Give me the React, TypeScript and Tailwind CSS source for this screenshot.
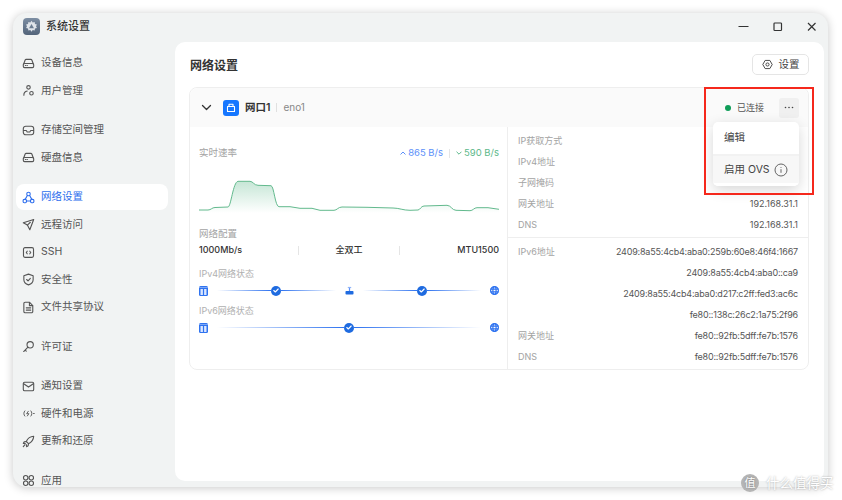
import React from "react";

const S = ({ children, size = 13, sw = 1.2 }: { children: React.ReactNode; size?: number; sw?: number }) => (
  <svg width={size} height={size} viewBox="0 0 14 14" fill="none" stroke="currentColor" strokeWidth={sw} strokeLinecap="round" strokeLinejoin="round">
    {children}
  </svg>
);

const Disk = () => (
  <S>
    <path d="M1.800 7.500 3.400 3.200a1.200 1.200 0 0 1 1.100-.7h5a1.200 1.200 0 0 1 1.100.7l1.600 4.300" />
    <rect x="1.400" y="7" width="11.200" height="4.400" rx="1.400" />
    <path d="M3.600 9.200h.4M5.400 9.200h.4" />
  </S>
);
const Users = () => (
  <S>
    <circle cx="7" cy="3.600" r="1.900" />
    <circle cx="10.200" cy="10" r="1.900" />
    <path d="M2 12c0-2.400 1.400-4 3.600-4.400" />
  </S>
);
const Storage = () => (
  <S>
    <rect x="1.400" y="2.400" width="11.200" height="9.200" rx="2.600" />
    <path d="M1.600 7h3l1 1.600h2.800l1-1.600h3" />
  </S>
);
const Net = () => (
  <S>
    <circle cx="7" cy="3.200" r="1.900" />
    <rect x="1.200" y="9" width="3.600" height="3.600" rx="1.200" />
    <rect x="9.200" y="9" width="3.600" height="3.600" rx="1.200" />
    <path d="M5.800 4.900 3.400 9M8.200 4.900 10.600 9M4.800 10.800h4.400" />
  </S>
);
const Send = () => (
  <S>
    <path d="M12.600 1.600 1.400 5.200l4.400 2.400 2.600 5z" />
    <path d="M5.800 7.600 9 4.600" />
  </S>
);
const Code = () => (
  <S>
    <rect x="1.600" y="1.800" width="10.800" height="10.400" rx="1.600" />
    <path d="M5.600 5.600 4.600 7l1 1.400M8.400 5.600 9.400 7l-1 1.400" />
  </S>
);
const Shield = () => (
  <S>
    <path d="M7 1.200 12 3v4.200c0 2.800-2.200 4.600-5 5.600-2.800-1-5-2.800-5-5.600V3z" />
    <path d="m5 7 1.500 1.500L9 5.800" />
  </S>
);
const Doc = () => (
  <S>
    <path d="M3.400 1.400h4.800L11.600 5v6.200a1.400 1.400 0 0 1-1.400 1.400H3.400A1.400 1.400 0 0 1 2 11.200V2.800a1.400 1.400 0 0 1 1.400-1.400z" />
    <path d="M8 1.600V5h3.400M4.600 7.400h4.800M4.600 9.800h4.800" />
  </S>
);
const KeyI = () => (
  <S>
    <circle cx="8.800" cy="5.200" r="3.400" />
    <path d="M6.400 7.600 1.800 12.400M3.400 10.800l1.200 1.200" />
  </S>
);
const Mail = () => (
  <S>
    <rect x="1.400" y="2.400" width="11.200" height="9.200" rx="1.400" />
    <path d="m1.800 4 5.200 3.600L12.200 4" />
  </S>
);
const Power = () => (
  <S sw={1}>
    <path d="M3 4.200C1.600 5.600 1.600 8.400 3 9.800M9.600 4.200c1.400 1.400 1.400 4.200 0 5.600" />
    <path d="M6.800 4.600 5 7.200h2.400L5.800 9.600" />
    <path d="M12.400 7h.8" />
  </S>
);
const Rocket = () => (
  <S>
    <path d="M12.600 1.400c-4 .2-6.400 2.200-8 5.600l2.400 2.400c3.400-1.600 5.400-4 5.600-8z" />
    <path d="M4.600 7 2.400 7.400 1.400 9l2.400.4M7 9.400l-.4 2.200-1.600 1-.4-2.400" />
    <path d="M3 10.600 1.400 12.600" />
  </S>
);
const Apps = () => (
  <S>
    <circle cx="4" cy="4" r="2.400" />
    <circle cx="10" cy="4" r="2.400" />
    <circle cx="4" cy="10" r="2.400" />
    <circle cx="10" cy="10" r="2.400" />
  </S>
);

const Item = ({ icon, label, active }: { icon: React.ReactNode; label: string; active?: boolean }) => (
  <div className={`mb-[1.500px] flex h-[26px] items-center gap-[6px] rounded-lg pl-[6px] text-[10.500px] ${active ? "bg-white text-[#2f6fed]" : "text-[#555]"}`}>
    <span className="flex w-[13px] justify-center">{icon}</span>
    <span>{label}</span>
  </div>
);

const Server = () => (
  <svg width="9" height="10" viewBox="0 0 9 10">
    <rect width="9" height="10" rx="1.500" fill="#2f73f0" />
    <rect x="1.500" y="3" width="2.400" height="6" fill="#dbe7ff" />
    <rect x="5.100" y="3" width="2.400" height="6" fill="#dbe7ff" />
    <path d="M0 1.500h9" stroke="#8fb4f8" strokeWidth="0.800" />
  </svg>
);
const Globe = () => (
  <svg width="9" height="9" viewBox="0 0 9 9" fill="none" stroke="#2f73f0" strokeWidth="1.200">
    <circle cx="4.500" cy="4.500" r="3.900" />
    <ellipse cx="4.500" cy="4.500" rx="1.600" ry="3.900" />
    <path d="M.5 3.200h8M.5 5.800h8" />
  </svg>
);
const Check = () => (
  <span className="flex h-[10px] w-[10px] shrink-0 items-center justify-center rounded-full bg-[#1f6be0]">
    <svg width="6" height="5" viewBox="0 0 6 5" fill="none" stroke="#fff" strokeWidth="1.100" strokeLinecap="round" strokeLinejoin="round">
      <path d="m.8 2.500 1.500 1.500L5.200 1" />
    </svg>
  </span>
);
const Line = () => (
  <div className="flex flex-1 items-center">
    <div className="h-[1.500px] flex-1 bg-gradient-to-r from-[#2f73f0]/0 to-[#2f73f0]" />
    <Check />
    <div className="h-[1.500px] flex-1 bg-gradient-to-r from-[#2f73f0] to-[#2f73f0]/0" />
  </div>
);
const Router = () => (
  <svg width="9" height="9" viewBox="0 0 9 9">
    <rect x="0.500" y="5" width="8" height="3.500" rx="0.800" fill="#1f6be0" />
    <path d="M4.500 5V2" stroke="#5b8ff9" strokeWidth="1.200" />
    <path d="M2.800 1.500h3.400" stroke="#8fb4f8" strokeWidth="1.200" />
  </svg>
);
const Up = ({ c }: { c: string }) => (
  <svg width="6" height="4" viewBox="0 0 6 4" fill="none" stroke={c} strokeWidth="1" strokeLinecap="round" strokeLinejoin="round"><path d="m.8 3.200 2.200-2.200 2.200 2.200" /></svg>
);
const Down = ({ c }: { c: string }) => (
  <svg width="6" height="4" viewBox="0 0 6 4" fill="none" stroke={c} strokeWidth="1" strokeLinecap="round" strokeLinejoin="round"><path d="m.8 1 2.200 2.200L5.200 1" /></svg>
);

const chart =
  "M0 35 L9 35 C12 35 13 32.500 16 32.500 L29 32 C32 32 34 7 39 6.300 L51 6.300 C54 6.300 55 10.300 59 10.300 L72 10.700 C75 10.700 76 31.700 80 31.700 L91 31.700 L101 33.300 L113 33.300 L121 35.300 L135 35.300 C138 35.300 139 32 143 32 L168 32.300 L194 33 C200 33 204 35.300 211 35.300 L219 35 C221 35 222 31 225 31 L248 30.300 C252 30.300 253 35.300 257 35.300 L271 35.700 C274 35.700 275 32.700 278 32.700 L289 32.700 L300 34.300";

const Row = ({ k, v, tight }: { k?: string; v?: string; tight?: boolean }) => (
  <div className="flex h-[21px] items-center justify-between">
    <span className="text-[#a3a3a3]">{k}</span>
    <span className={tight ? "tracking-[-0.2px] text-[#555]" : "text-[#555]"}>{v}</span>
  </div>
);

export default function App() {
  return (
    <div className="relative h-[500px] w-[842px] overflow-hidden bg-white pl-[13px] pt-[13px] [font-family:Inter,'Noto_Sans_CJK_SC',sans-serif]">
      <div className="flex h-[474px] w-[815px] flex-col overflow-hidden rounded-[14px] bg-[#f1f3f3] shadow-[0_1px_10px_rgba(0,0,0,0.22)]">
        {/* title bar */}
        <div className="flex h-[29px] shrink-0 items-center pb-[2px] pl-[10px] pr-[11px]">
          <div className="flex h-[17px] w-[17px] items-center justify-center rounded-[4px] bg-gradient-to-b from-[#7d8ea3] to-[#53647a]">
            <svg width="13" height="13" viewBox="0 0 24 24">
              <path fill="#dfe4ea" d="M12 1.500l2.200 3 3.600-1 .6 3.700 3.600 1-1.600 3.300 1.600 3.300-3.600 1-.6 3.700-3.600-1-2.200 3-2.200-3-3.600 1-.6-3.700-3.600-1 1.600-3.300-1.600-3.300 3.600-1 .6-3.700 3.600 1z" />
              <path fill="#6b7d92" d="M12 7.500l4.500 7.500h-9z" />
            </svg>
          </div>
          <span className="ml-[6px] text-[11px] font-medium text-[#333]">系统设置</span>
          <div className="ml-auto flex items-center gap-[23px] text-[#333]">
            <svg width="11" height="11" viewBox="0 0 11 11" stroke="currentColor" strokeWidth="1.200"><path d="M.5 5.500h10" /></svg>
            <svg width="11" height="11" viewBox="0 0 11 11" fill="none" stroke="currentColor" strokeWidth="1.200"><rect x="2" y="2" width="7.500" height="7.500" rx="0.800" /></svg>
            <svg width="11" height="11" viewBox="0 0 11 11" stroke="currentColor" strokeWidth="1.200"><path d="m2 2 7.500 7.500M9.500 2 2 9.500" /></svg>
          </div>
        </div>
        <div className="flex min-h-0 flex-1">
          {/* sidebar */}
          <div className="w-[162px] shrink-0 overflow-hidden pl-[3px] pr-[7px] pt-[8px]">
            <Item icon={<Disk />} label="设备信息" />
            <Item icon={<Users />} label="用户管理" />
            <div className="h-[12px]" />
            <Item icon={<Storage />} label="存储空间管理" />
            <Item icon={<Disk />} label="硬盘信息" />
            <div className="h-[12px]" />
            <Item icon={<Net />} label="网络设置" active />
            <Item icon={<Send />} label="远程访问" />
            <Item icon={<Code />} label="SSH" />
            <Item icon={<Shield />} label="安全性" />
            <Item icon={<Doc />} label="文件共享协议" />
            <div className="h-[12px]" />
            <Item icon={<KeyI />} label="许可证" />
            <div className="h-[12px]" />
            <Item icon={<Mail />} label="通知设置" />
            <Item icon={<Power />} label="硬件和电源" />
            <Item icon={<Rocket />} label="更新和还原" />
            <div className="h-[12px]" />
            <Item icon={<Apps />} label="应用" />
          </div>
          {/* main */}
          <div className="mb-[6px] mr-[4px] flex-1 rounded-[10px] bg-white px-[14px] pt-[12px]">
            <div className="flex h-[21px] items-center justify-between pr-px">
              <span className="pl-px pt-[2px] text-[12px] font-semibold text-[#333]">网络设置</span>
              <div className="flex h-[21px] w-[57px] items-center justify-center gap-[6px] rounded-[5px] border border-[#e5e5e5] text-[10.500px] text-[#444]">
                <svg width="11" height="11" viewBox="0 0 14 14" fill="none" stroke="currentColor" strokeWidth="1.200" strokeLinejoin="round">
                  <path d="M4 1.800h6L13 7l-3 5.200H4L1 7z" />
                  <circle cx="7" cy="7" r="2" />
                </svg>
                <span>设置</span>
              </div>
            </div>
            {/* card */}
            <div className="relative mt-[12px] h-[283px] w-[620px] rounded-lg border border-[#eeeeee]">
              <div className="flex h-[39px] items-center rounded-t-lg bg-[#fafafa] pl-[11px] pr-[9px]">
                <svg width="11" height="11" viewBox="0 0 11 11" fill="none" stroke="#333" strokeWidth="1.300" strokeLinecap="round" strokeLinejoin="round"><path d="m1.500 3.500 4 4 4-4" /></svg>
                <div className="ml-[11px] flex h-[16px] w-[16px] items-center justify-center rounded-[3px] bg-[#1677ff]">
                  <svg width="10" height="10" viewBox="0 0 10 10" fill="none" stroke="#fff" strokeWidth="1.100" strokeLinejoin="round"><path d="M1.500 3.500h7v5h-7zM3 3.500V1.200h4v2.300" /></svg>
                </div>
                <span className="ml-[6px] text-[10.500px] font-semibold text-[#333]">网口1</span>
                <span className="ml-[6px] h-[9px] w-px bg-[#e0e0e0]" />
                <span className="ml-[6px] text-[10px] text-[#888]">eno1</span>
                <span className="ml-auto h-[6px] w-[6px] rounded-full bg-[#0f9d58]" />
                <span className="ml-[6px] text-[9px] text-[#555]">已连接</span>
                <div className="ml-[15px] flex h-[20px] w-[20px] items-center justify-center rounded-[3px] bg-[#f0f0f0]">
                  <svg width="10" height="3" viewBox="0 0 10 3" fill="#444"><circle cx="1.500" cy="1.500" r="0.800" /><circle cx="5" cy="1.500" r="0.800" /><circle cx="8.500" cy="1.500" r="0.800" /></svg>
                </div>
              </div>
              <div className="flex h-[243px]">
                {/* left */}
                <div className="w-[318px] shrink-0 border-r border-[#eeeeee] pl-[9px] pr-[8px] pt-[19px]">
                  <div className="flex h-[14px] items-center justify-between text-[9.500px]">
                    <span className="text-[#a3a3a3]">实时速率</span>
                    <div className="flex items-center">
                      <Up c="#5b8ff9" />
                      <span className="ml-[2px] text-[#5b8ff9]">865 B/s</span>
                      <span className="mx-[6px] h-[9px] w-px bg-[#e5e5e5]" />
                      <Down c="#5cb88a" />
                      <span className="ml-[2px] text-[#5cb88a]">590 B/s</span>
                    </div>
                  </div>
                  <svg className="mt-[15px] block" width="300" height="38" viewBox="0 0 300 38" fill="none">
                    <defs>
                      <linearGradient id="g" x1="0" y1="0" x2="0" y2="1">
                        <stop offset="0" stopColor="#5cb88a" stopOpacity="0.350" />
                        <stop offset="1" stopColor="#5cb88a" stopOpacity="0" />
                      </linearGradient>
                    </defs>
                    <path d={`${chart} L300 38 L0 38 Z`} fill="url(#g)" />
                    <path d={chart} stroke="#62b98d" strokeWidth="1" />
                  </svg>
                  <div className="mt-[14px] h-[14px] text-[9.500px] leading-[14px] text-[#a3a3a3]">网络配置</div>
                  <div className="mt-[2px] flex h-[14px] items-center justify-between text-[9px] font-medium text-[#333]">
                    <span className="w-[100px]">1000Mb/s</span>
                    <span className="h-[9px] w-px bg-[#e5e5e5]" />
                    <span className="w-[100px] text-center">全双工</span>
                    <span className="h-[9px] w-px bg-[#e5e5e5]" />
                    <span className="w-[100px] text-right">MTU1500</span>
                  </div>
                  <div className="mt-[10px] h-[14px] text-[9px] leading-[14px] text-[#b0b0b0]">IPv4网络状态</div>
                  <div className="mt-[3px] flex h-[13px] items-center gap-[9px]">
                    <Server />
                    <Line />
                    <Router />
                    <Line />
                    <Globe />
                  </div>
                  <div className="mt-[7px] h-[14px] text-[9px] leading-[14px] text-[#b0b0b0]">IPv6网络状态</div>
                  <div className="mt-[3px] flex h-[13px] items-center gap-[9px]">
                    <Server />
                    <Line />
                    <Globe />
                  </div>
                </div>
                {/* right */}
                <div className="flex-1 text-[9px]">
                  <div className="border-b border-[#eeeeee] px-[10px] pb-[2px] pt-[3px]">
                    <Row k="IP获取方式" />
                    <Row k="IPv4地址" />
                    <Row k="子网掩码" />
                    <Row k="网关地址" v="192.168.31.1" />
                    <Row k="DNS" v="192.168.31.1" />
                  </div>
                  <div className="px-[10px] pt-[3px]">
                    <Row k="IPv6地址" tight v="2409:8a55:4cb4:aba0:259b:60e8:46f4:1667" />
                    <Row tight v="2409:8a55:4cb4:aba0::ca9" />
                    <Row tight v="2409:8a55:4cb4:aba0:d217:c2ff:fed3:ac6c" />
                    <Row tight v="fe80::138c:26c2:1a75:2f96" />
                    <Row k="网关地址" tight v="fe80::92fb:5dff:fe7b:1576" />
                    <Row k="DNS" tight v="fe80::92fb:5dff:fe7b:1576" />
                  </div>
                </div>
              </div>
              {/* dropdown */}
              <div className="absolute right-[9px] top-[34px] w-[86px] overflow-hidden rounded-[5px] bg-white shadow-[0_4px_14px_rgba(0,0,0,0.16)]">
                <div className="flex h-[32px] items-center pl-[11px] text-[10.500px] text-[#444]">编辑</div>
                <div className="flex h-[29px] items-center gap-[4px] border-t-2 border-[#f2f2f2] bg-[#f7f7f7] pl-[11px] text-[10.500px] text-[#444]">
                  <span>启用 OVS</span>
                  <svg width="14" height="14" viewBox="0 0 14 14" fill="none" stroke="#555" strokeWidth="0.900"><circle cx="7" cy="7" r="6" /><path d="M7 6.200v3.600M7 4.200v.8" /></svg>
                </div>
                <div className="h-[3px] bg-white" />
              </div>
              {/* annotation */}
              <div className="pointer-events-none absolute right-[-6px] top-[-1px] h-[108px] w-[110px] border-2 border-[#f5281c]" />
            </div>
          </div>
        </div>
      </div>
      {/* watermark */}
      <div className="absolute left-[741px] top-[474px] flex items-center gap-[7px] text-white [text-shadow:0_0_2px_rgba(0,0,0,0.35)]">
        <span className="flex h-[18px] w-[18px] items-center justify-center rounded-full bg-[#b5b5b5] text-[11px]">值</span>
        <span className="text-[13.500px] leading-[18px]">什么值得买</span>
      </div>
    </div>
  );
}
